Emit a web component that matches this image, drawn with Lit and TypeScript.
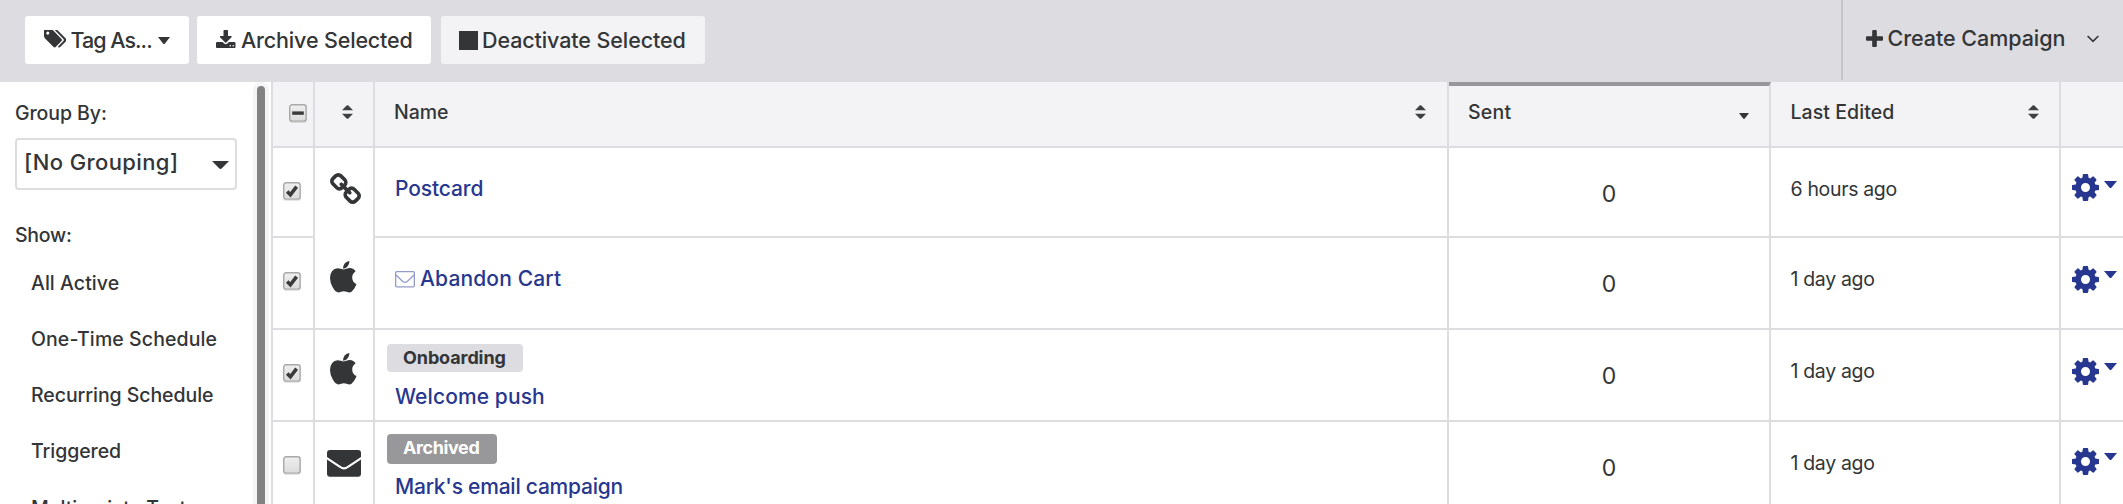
import { LitElement, html, svg, css, nothing } from "lit";
import { customElement } from "lit/decorators.js";
import { classMap } from "lit/directives/class-map.js";

const PATHS = {
  tags: "M448 448q0-53-37.5-90.5t-90.5-37.5-90.5 37.5-37.5 90.5 37.5 90.5 90.5 37.5 90.5-37.5 37.5-90.5zm1067 576q0 53-37 90l-491 492q-39 37-91 37-53 0-90-37l-715-716q-38-37-64.5-101t-26.5-117v-416q0-52 38-90t90-38h416q53 0 117 26.5t102 64.5l715 714q37 39 37 91zm384 0q0 53-37 90l-491 492q-39 37-91 37-36 0-59-14t-53-45l470-470q37-37 37-90 0-52-37-91l-715-714q-38-38-102-64.5t-117-26.5h224q53 0 117 26.5t102 64.5l715 714q37 39 37 91z",
  download: "M1344 1344q0-26-19-45t-45-19-45 19-19 45 19 45 45 19 45-19 19-45zm256 0q0-26-19-45t-45-19-45 19-19 45 19 45 45 19 45-19 19-45zm128-224v320q0 40-28 68t-68 28h-1472q-40 0-68-28t-28-68v-320q0-40 28-68t68-28h465l135 136q58 56 136 56t136-56l136-136h464q40 0 68 28t28 68zm-325-569q17 41-14 70l-448 448q-18 19-45 19t-45-19l-448-448q-31-29-14-70 17-39 59-39h256v-448q0-26 19-45t45-19h256q26 0 45 19t19 45v448h256q42 0 59 39z",
  plus: "M1600 736v192q0 40-28 68t-68 28h-416v416q0 40-28 68t-68 28h-192q-40 0-68-28t-28-68v-416h-416q-40 0-68-28t-28-68v-192q0-40 28-68t68-28h416v-416q0-40 28-68t68-28h192q40 0 68 28t28 68v416h416q40 0 68 28t28 68z",
  cog: "M1152 896q0-106-75-181t-181-75-181 75-75 181 75 181 181 75 181-75 75-181zm512-109v222q0 12-8 23t-20 13l-185 28q-19 54-39 91 35 50 107 138 10 12 10 25t-9 23q-27 37-99 108t-94 71q-12 0-26-9l-138-108q-44 23-91 38-16 136-29 186-7 28-36 28h-222q-14 0-24.5-8.5t-11.5-21.5l-28-184q-49-16-90-37l-141 107q-10 9-25 9-14 0-25-11-126-114-165-168-7-10-7-23 0-12 8-23 15-21 51-66.5t54-70.5q-27-50-41-99l-183-27q-13-2-21-12.5t-8-23.5v-222q0-12 8-23t19-13l186-28q14-46 39-92-40-57-107-138-10-12-10-24 0-10 9-23 26-36 98.5-107.5t94.5-71.5q13 0 26 10l138 107q44-23 91-38 16-136 29-186 7-28 36-28h222q14 0 24.5 8.5t11.5 21.5l28 184q49 16 90 37l142-107q9-9 24-9 13 0 25 10 129 119 165 170 7 8 7 22 0 12-8 23-15 21-51 66.5t-54 70.5q26 50 41 98l183 28q13 2 21 12.5t8 23.5z",
  apple: "M1585 1215q-39 125-123 250-129 196-257 196-49 0-140-32-86-32-151-32-61 0-142 33-81 34-132 34-152 0-301-259-147-261-147-503 0-228 113-374 112-144 284-144 72 0 177 30 104 30 138 30 45 0 143-34 102-34 173-34 119 0 213 65 52 36 104 100-79 67-114 118-65 94-65 207 0 124 69 223t158 126zm-376-1173q0 61-29 136-30 75-93 138-54 54-108 72-37 11-104 17 3-149 78-257 74-107 250-148 1 3 2.5 11t2.5 11q0 4 .5 10t.5 10z",
  link: "M1520 1216q0-40-28-68l-208-208q-28-28-68-28-42 0-72 32 3 3 19 18.5t21.5 21.5 15 19 13 25.5 3.5 27.5q0 40-28 68t-68 28q-15 0-27.5-3.5t-25.5-13-19-15-21.5-21.5-18.5-19q-33 31-33 73 0 40 28 68l206 207q27 27 68 27 40 0 68-26l147-146q28-28 28-67zm-703-705q0-40-28-68l-206-207q-28-28-68-28-39 0-68 27l-147 146q-28 28-28 67 0 40 28 68l208 208q27 27 68 27 42 0 72-31-3-3-19-18.5t-21.5-21.5-15-19-13-25.5-3.5-27.5q0-40 28-68t68-28q15 0 27.5 3.5t25.5 13 19 15 21.5 21.5 18.5 19q33-31 33-73zm895 705q0 120-85 203l-147 146q-83 83-203 83-121 0-204-85l-206-207q-83-83-83-203 0-123 88-209l-88-88q-86 88-208 88-120 0-204-84l-208-208q-84-84-84-204t85-203l147-146q83-83 203-83 121 0 204 85l206 207q83 83 83 203 0 123-88 209l88 88q86-88 208-88 120 0 204 84l208 208q84 84 84 204z",
};

const icon = (name: keyof typeof PATHS, viewBox: string, w: number, h: number) =>
  html`<svg width=${w} height=${h} viewBox=${viewBox} preserveAspectRatio="none" fill="currentColor">${svg`<path d=${PATHS[name]}/>`}</svg>`;

const caret = (w: number, h: number) =>
  html`<svg class="caret" width=${w} height=${h} viewBox="0 0 12 7" preserveAspectRatio="none" fill="currentColor"><path d="M0 0H12L7 6.4Q6 7.4 5 6.4Z"/></svg>`;

const sorter = () => html`<svg class="sorter" width="11" height="14" viewBox="0 0 11 14" fill="#3f4042">
  <path d="M0 5.3L4.6.5Q5.5-.2 6.4.5L11 5.3ZM0 8.7H11L6.4 13.4Q5.5 14.2 4.6 13.4Z"/></svg>`;

const checkbox = (state: "on" | "off" | "mixed") => html`<svg class="check" width="20" height="20" viewBox="0 0 20 20">
  <defs><linearGradient id="g" x1="0" y1="0" x2="0" y2="1"><stop offset="0" stop-color="#efefef"/><stop offset="1" stop-color="#dcdcdc"/></linearGradient></defs>
  <rect x=".8" y="1.8" width="16.6" height="16.6" rx="2.6" fill="none" stroke="#000" stroke-opacity=".1" stroke-width="1.4"/>
  <rect x=".7" y=".7" width="16.4" height="16.4" rx="2.4" fill="url(#g)" stroke="#a9a9a9" stroke-width="1.4"/>
  ${state === "mixed" ? svg`<rect x="3.2" y="7.4" width="11.6" height="3.4" fill="#3b3b3b"/>` : nothing}
  ${state === "on" ? svg`<path d="M4.2 9.6L7.4 12.8L13.6 4.6" fill="none" stroke="#3b3b3b" stroke-width="3.6"/>` : nothing}
</svg>`;

const envelope = html`<svg width="34" height="27" viewBox="0 0 34 27">
  <rect width="34" height="26.8" rx="3" fill="#333537"/>
  <path d="M-1 7.6L13 16.8Q17 20 21 16.8L35 7.6" fill="none" stroke="#fff" stroke-width="2.1"/></svg>`;

const smallEnvelope = html`<svg class="mini" width="20" height="17" viewBox="0 0 20 17" fill="none" stroke="#929cca" stroke-width="1.3">
  <rect x=".65" y=".65" width="18.7" height="15.2" rx="1"/><path d="M1 4L7.8 10.4Q10 12.3 12.2 10.4L19 4"/></svg>`;

interface Campaign {
  id: string;
  name: string;
  kind: "link" | "apple" | "mail";
  selected: boolean;
  edited: string;
  badge?: string;
  draft?: boolean;
}

const CAMPAIGNS: Campaign[] = [
  { id: "postcard", name: "Postcard", kind: "link", selected: true, edited: "6 hours ago" },
  { id: "cart", name: "Abandon Cart", kind: "apple", selected: true, edited: "1 day ago", draft: true },
  { id: "welcome", name: "Welcome push", kind: "apple", selected: true, edited: "1 day ago", badge: "Onboarding" },
  { id: "mark", name: "Mark's email campaign", kind: "mail", selected: false, edited: "1 day ago", badge: "Archived" },
];

const FILTERS: [string, string][] = [
  ["All Active", "f1"],
  ["One-Time Schedule", "f2"],
  ["Recurring Schedule", "f3"],
  ["Triggered", "f4"],
  ["Multivariate Test", "f5"],
];

@customElement("app-root")
export class AppRoot extends LitElement {
  static styles = css`
    :host {
      display: flex;
      flex-direction: column;
      height: 504px;
      overflow: hidden;
      background: #fff;
      color: #333537;
      font: 500 19.5px/24px Inter, "Liberation Sans", sans-serif;
      white-space: nowrap;
    }
    * { box-sizing: border-box; }
    svg { display: block; flex: none; }

    .toolbar { flex: none; display: flex; height: 82px; padding-left: 25px; background: #dddce1; font-size: 21.5px; }
    .btn { display: flex; align-items: center; height: 48px; margin-top: 16px; border-radius: 3px; background: #fff; }
    .btn.tag { width: 164px; padding-left: 18.5px; letter-spacing: -0.98px; }
    .btn.tag span { width: 87px; margin-left: 4.5px; }
    .btn.tag .caret { margin-top: 2px; }
    .btn.archive { width: 234px; margin-left: 8px; padding-left: 19px; gap: 5.5px; letter-spacing: -0.16px; }
    .btn.deactivate { width: 264px; margin-left: 10px; padding-left: 18px; gap: 4px; background: #f3f3f5; letter-spacing: -0.1px; }
    .btn svg { margin-bottom: 2px; }
    .stop { width: 19px; height: 19px; margin-top: 1px; background: #333537; }
    .create { display: flex; align-items: center; width: 282px; height: 80px; margin-left: auto; padding: 0 24px 4px 23px; border-left: 2px solid #c6c5cb; letter-spacing: -0.05px; }
    .create span { margin-left: 4.5px; }
    .create .chev { margin-left: auto; margin-top: 2px; }

    .body { flex: 1; display: flex; min-height: 0; }
    .side { flex: none; width: 253px; padding: 19px 0 0 15px; overflow: hidden; }
    .group { letter-spacing: -0.07px; }
    .select { display: flex; align-items: center; justify-content: space-between; width: 222px; height: 52px; margin-top: 13px; padding: 0 6px 5px 7px; border: 2px solid #dddce1; border-radius: 4px; font-size: 22px; letter-spacing: 0.4px; }
    .select .caret { margin-top: 6px; }
    .show { margin-top: 33px; letter-spacing: -0.24px; }
    .filters { display: flex; flex-direction: column; gap: 32px; margin-top: 24px; padding-left: 16px; }
    .f1 { letter-spacing: 0.06px; }
    .f2 { letter-spacing: 0.09px; }
    .f3, .f4 { letter-spacing: -0.06px; }
    .f5 { padding-top: 1px; }
    .scroll { flex: none; width: 15.5px; padding: 4px 3.5px 0 4px; border-radius: 7px 7px 0 0; background: #f5f5f6; }
    .thumb { height: 100%; border-radius: 4px 4px 0 0; background: #828282; }

    .table { flex: 1; margin-left: 2.5px; border-left: 2px solid #dddce1; }
    .row { display: grid; grid-template-columns: 42px 60px 1074px 322px 290px 1fr; height: 92px; }
    .row:nth-child(2) { height: 90px; }
    .row.head { height: 66px; background: #f3f3f5; }
    .cell { border-right: 2px solid #dddce1; border-bottom: 2px solid #dddce1; overflow: hidden; }
    .cell:last-child { border-right: 0; }
    .cell.open { border-bottom: 0; }

    .head .cell { display: flex; justify-content: space-between; padding: 18px 20px 0 19px; }
    .head .sorter { margin-top: 5px; }
    .head .c-check { padding: 22px 0 0 16px; }
    .head .c-icon { padding: 18px 0 0 27px; }
    .head .c-name { padding-right: 21px; letter-spacing: -0.05px; }
    .head .c-sent { padding-top: 14px; border-top: 4px solid #98989a; letter-spacing: 0.2px; }
    .head .c-sent .caret { margin-top: 13px; }
    .head .c-edit { padding-left: 19.5px; letter-spacing: 0.06px; }

    .data .c-check { padding: 34px 0 0 10px; }
    .data .c-icon { padding: 23px 0 0 15px; }
    .data .link.c-icon { padding-top: 25px; }
    .data .mail.c-icon { padding: 28px 0 0 12px; }
    .data .c-name { display: flex; flex-direction: column; align-items: flex-start; padding: 29px 0 0 12px; }
    .data .c-name.tagged { padding-top: 14px; }
    .data .c-name.arch { padding-top: 12px; }
    .title { display: flex; padding-left: 8px; color: #27378f; font-size: 21px; }
    .title .mini { margin: 4px 5px 0 0; }
    .tagged .title { margin-top: 13px; }
    .arch .title { margin-top: 11px; }
    .postcard .title { letter-spacing: -0.11px; }
    .cart .title { letter-spacing: 0.15px; }
    .welcome .title { letter-spacing: 0.1px; }
    .mark .title { letter-spacing: -0.23px; }
    .badge { width: 136px; height: 28px; padding-left: 16px; border-radius: 4px; background: #dddce1; font-size: 18px; line-height: 28px; font-weight: 700; letter-spacing: -0.1px; }
    .arch .badge { width: 110px; height: 30px; background: #98989a; color: #fff; letter-spacing: -0.4px; }
    .data .c-sent { padding-top: 34px; text-align: center; font-size: 23px; font-weight: 400; }
    .data .c-edit { padding: 29px 0 0 19.5px; font-weight: 400; letter-spacing: -0.34px; }
    .data .c-act { display: flex; align-items: flex-start; gap: 5px; padding: 28px 0 0 11px; color: #27378f; }
    .data .c-act .caret { margin-top: 5px; }
    .postcard .c-act { padding-top: 26px; }
    .postcard .c-act .caret { margin-top: 7px; }
    .mark .c-act { padding-top: 26px; }
  `;

  private kindIcon(kind: Campaign["kind"]) {
    if (kind === "link") return icon("link", "80 16 1632 1632", 31, 31);
    if (kind === "apple") return icon("apple", "192 0 1393 1663", 26.5, 31.5);
    return envelope;
  }

  private row(c: Campaign) {
    const kindClasses = { cell: true, "c-icon": true, [c.kind]: true, open: c.kind === "link" };
    const nameClasses = { cell: true, "c-name": true, tagged: !!c.badge, arch: c.badge === "Archived" };
    return html`<div class="row data ${c.id}">
      <div class="cell c-check">${checkbox(c.selected ? "on" : "off")}</div>
      <div class=${classMap(kindClasses)}>${this.kindIcon(c.kind)}</div>
      <div class=${classMap(nameClasses)}>
        ${c.badge ? html`<span class="badge">${c.badge}</span>` : nothing}
        <div class="title">${c.draft ? smallEnvelope : nothing}<span>${c.name}</span></div>
      </div>
      <div class="cell c-sent">0</div>
      <div class="cell c-edit">${c.edited}</div>
      <div class="cell c-act">${icon("cog", "128 128 1536 1536", 27, 27)}${caret(13, 7)}</div>
    </div>`;
  }

  render() {
    return html`
      <div class="toolbar">
        <div class="btn tag">${icon("tags", "0 192 1899 1451", 22.5, 17.5)}<span>Tag As...</span>${caret(12, 7)}</div>
        <div class="btn archive">${icon("download", "64 0 1664 1536", 19.5, 18)}<span>Archive Selected</span></div>
        <div class="btn deactivate"><i class="stop"></i><span>Deactivate Selected</span></div>
        <div class="create">
          ${icon("plus", "192 128 1408 1408", 17, 17)}<span>Create Campaign</span>
          <svg class="chev" width="12" height="8" viewBox="0 0 12 8" fill="none" stroke="#333537" stroke-width="1.6"><path d="M.6 1L6 6.4L11.4 1"/></svg>
        </div>
      </div>
      <div class="body">
        <div class="side">
          <div class="group">Group By:</div>
          <div class="select"><span>[No Grouping]</span>${caret(17, 8)}</div>
          <div class="show">Show:</div>
          <div class="filters">${FILTERS.map(([label, cls]) => html`<div class=${cls}>${label}</div>`)}</div>
        </div>
        <div class="scroll"><div class="thumb"></div></div>
        <div class="table">
          <div class="row head">
            <div class="cell c-check">${checkbox("mixed")}</div>
            <div class="cell c-icon">${sorter()}</div>
            <div class="cell c-name"><span>Name</span>${sorter()}</div>
            <div class="cell c-sent"><span>Sent</span>${caret(10, 6)}</div>
            <div class="cell c-edit"><span>Last Edited</span>${sorter()}</div>
            <div class="cell"></div>
          </div>
          ${CAMPAIGNS.map((c) => this.row(c))}
        </div>
      </div>
    `;
  }
}
